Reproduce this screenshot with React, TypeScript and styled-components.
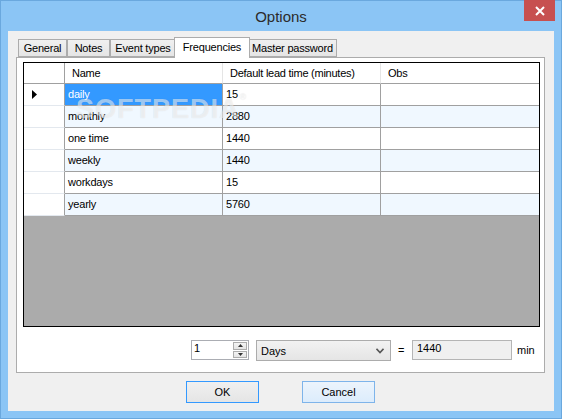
import React from 'react'
import styled, { createGlobalStyle } from 'styled-components'

const GlobalStyle = createGlobalStyle`
  html, body {
    margin: 0;
    padding: 0;
  }
  body {
    font-family: "Liberation Sans", Arial, sans-serif;
    font-size: 11px;
    color: #000;
  }
`

interface Frequency {
  name: string
  lead: string
  obs: string
}

const frequencies: Frequency[] = [
  { name: 'daily', lead: '15', obs: '' },
  { name: 'monthly', lead: '2880', obs: '' },
  { name: 'one time', lead: '1440', obs: '' },
  { name: 'weekly', lead: '1440', obs: '' },
  { name: 'workdays', lead: '15', obs: '' },
  { name: 'yearly', lead: '5760', obs: '' }
]

const tabs = [
  { label: 'General', width: 49 },
  { label: 'Notes', width: 43 },
  { label: 'Event types', width: 66 },
  { label: 'Frequencies', width: 72 },
  { label: 'Master password', width: 89 }
]

const App = () => {
  const activeTab = 'Frequencies'

  return (
    <>
      <GlobalStyle />
      <Window>
        <TitleBar>
          <span />
          <Title>Options</Title>
          <CloseButton>
            <svg width="10" height="10" viewBox="0 0 10 10">
              <path d="M1 1 L9 9 M9 1 L1 9" stroke="#fff" strokeWidth="2" />
            </svg>
          </CloseButton>
        </TitleBar>

        <Client>
          <TabStrip>
            {tabs.map((t) => (
              <Tab key={t.label} $width={t.width} $active={t.label === activeTab}>
                {t.label}
              </Tab>
            ))}
          </TabStrip>

          <TabPanel>
            <Grid>
              <GridRow $header>
                <HeaderCell $rowHeader />
                <HeaderCell>Name</HeaderCell>
                <HeaderCell>Default lead time (minutes)</HeaderCell>
                <HeaderCell>Obs</HeaderCell>
              </GridRow>
              {frequencies.map((f, i) => (
                <GridRow key={f.name}>
                  <RowHeaderCell>
                    {i === 0 && (
                      <svg width="5" height="9" viewBox="0 0 5 9">
                        <path d="M0 0 L5 4.5 L0 9 Z" fill="#000" />
                      </svg>
                    )}
                  </RowHeaderCell>
                  <Cell $alt={i % 2 === 1} $selected={i === 0}>
                    {f.name}
                  </Cell>
                  <Cell $alt={i % 2 === 1}>{f.lead}</Cell>
                  <Cell $alt={i % 2 === 1}>{f.obs}</Cell>
                </GridRow>
              ))}
              <Watermark>
                SOFTPEDIA<sup>®</sup>
              </Watermark>
            </Grid>

            <ControlsRow>
              <Spinner>
                <SpinValue>1</SpinValue>
                <SpinButtons>
                  <SpinButton>
                    <svg width="5" height="3" viewBox="0 0 5 3">
                      <path d="M0 3 L2.5 0 L5 3 Z" fill="#333" />
                    </svg>
                  </SpinButton>
                  <SpinButton>
                    <svg width="5" height="3" viewBox="0 0 5 3">
                      <path d="M0 0 L2.5 3 L5 0 Z" fill="#333" />
                    </svg>
                  </SpinButton>
                </SpinButtons>
              </Spinner>
              <Combo>
                <ComboText>Days</ComboText>
                <svg width="8" height="6" viewBox="0 0 8 6">
                  <path d="M0.5 0.8 L4 4.5 L7.5 0.8" stroke="#555" strokeWidth="1.6" fill="none" />
                </svg>
              </Combo>
              <Equals>=</Equals>
              <ReadOnlyBox>1440</ReadOnlyBox>
              <Unit>min</Unit>
            </ControlsRow>
          </TabPanel>

          <ButtonRow>
            <DialogButton $default>OK</DialogButton>
            <DialogButton $hover>Cancel</DialogButton>
          </ButtonRow>
        </Client>
      </Window>
    </>
  )
}

const Window = styled.div`
  width: 562px;
  height: 419px;
  box-sizing: border-box;
  background: #8bc5f5;
  border: 1px solid #6aa8de;
  display: flex;
  flex-direction: column;
`

const TitleBar = styled.div`
  height: 30px;
  display: grid;
  grid-template-columns: 1fr auto 1fr;
  align-items: start;
`

const Title = styled.div`
  font-size: 15px;
  line-height: 30px;
  padding-top: 1px;
  color: #2b2b2b;
`

const CloseButton = styled.div`
  justify-self: end;
  margin-top: -1px;
  margin-right: 6px;
  width: 31px;
  height: 21px;
  background: #c75050;
  display: flex;
  align-items: center;
  justify-content: center;
`

const Client = styled.div`
  flex: 1;
  margin: 0 7px 7px 7px;
  background: #f0f0f0;
  padding: 6px 9px 0 8px;
  display: flex;
  flex-direction: column;
`

const TabStrip = styled.div`
  height: 20px;
  display: flex;
  align-items: flex-start;
  padding-left: 2px;
  position: relative;
  z-index: 1;
`

const Tab = styled.div<{ $width: number; $active?: boolean }>`
  box-sizing: border-box;
  width: ${({ $width, $active }) => ($active ? $width + 4 : $width)}px;
  height: ${({ $active }) => ($active ? 21 : 18)}px;
  margin: ${({ $active }) => ($active ? '0 -2px' : '2px 0 0 0')};
  border: 1px solid #acacac;
  border-bottom: ${({ $active }) => ($active ? 'none' : '1px solid #acacac')};
  background: ${({ $active }) => ($active ? '#fff' : 'linear-gradient(#f0f0f0, #e5e5e5)')};
  position: relative;
  z-index: ${({ $active }) => ($active ? 2 : 1)};
  display: flex;
  align-items: center;
  justify-content: center;
  padding-bottom: ${({ $active }) => ($active ? 3 : 0)}px;
  letter-spacing: -0.2px;
  white-space: nowrap;
  cursor: default;
`

const TabPanel = styled.div`
  box-sizing: border-box;
  height: 316px;
  border: 1px solid #acacac;
  background: #fff;
  padding: 4px 4px 0 6px;
  display: flex;
  flex-direction: column;
`

const Grid = styled.div`
  box-sizing: border-box;
  height: 265px;
  border: 1px solid #000;
  background: #ababab;
  position: relative;
  overflow: hidden;
`

const GridRow = styled.div<{ $header?: boolean }>`
  display: grid;
  grid-template-columns: 41px 158px 158px 1fr;
  height: ${({ $header }) => ($header ? 21 : 22)}px;
`

const HeaderCell = styled.div<{ $rowHeader?: boolean }>`
  box-sizing: border-box;
  background: #fff;
  border-right: 1px solid ${({ $rowHeader }) => ($rowHeader ? '#a0a0a0' : '#e5e5e5')};
  border-bottom: 1px solid #a0a0a0;
  padding-left: 7px;
  line-height: 20px;
  letter-spacing: -0.25px;
  white-space: nowrap;
  overflow: hidden;

  &:last-child {
    border-right: none;
  }
`

const RowHeaderCell = styled.div`
  box-sizing: border-box;
  background: #fff;
  border-right: 1px solid #a0a0a0;
  border-bottom: 1px solid #e3e8ee;
  display: flex;
  align-items: center;
  padding-left: 8px;
`

const Cell = styled.div<{ $alt?: boolean; $selected?: boolean }>`
  box-sizing: border-box;
  background: ${({ $alt, $selected }) => ($selected ? '#3399ff' : $alt ? '#f0f8ff' : '#fff')};
  color: ${({ $selected }) => ($selected ? '#fff' : '#000')};
  border-right: 1px solid #a0a0a0;
  border-bottom: 1px solid #a0a0a0;
  padding-left: 3px;
  line-height: 21px;
  letter-spacing: -0.2px;
  white-space: nowrap;
  overflow: hidden;

  &:last-child {
    border-right: none;
  }
`

const Watermark = styled.div`
  position: absolute;
  left: 52px;
  top: 31px;
  font-family: "Liberation Sans", Arial, sans-serif;
  font-weight: bold;
  font-size: 27px;
  letter-spacing: 1px;
  color: rgba(255, 255, 255, 0.55);
  text-shadow: 0 0 1px rgba(0, 0, 0, 0.12);
  pointer-events: none;

  sup {
    font-size: 9px;
    vertical-align: top;
    position: relative;
    top: -2px;
  }
`

const ControlsRow = styled.div`
  display: flex;
  align-items: flex-start;
  margin-top: 13px;
  padding-left: 168px;
  height: 22px;
`

const Spinner = styled.div`
  box-sizing: border-box;
  width: 58px;
  height: 20px;
  border: 1px solid #abadb3;
  background: #fff;
  display: flex;
`

const SpinValue = styled.span`
  flex: 1;
  padding-left: 2px;
  line-height: 15px;
`

const SpinButtons = styled.div`
  width: 14px;
  margin: 1px 1px 1px 0;
  display: flex;
  flex-direction: column;
  gap: 1px;
`

const SpinButton = styled.div`
  flex: 1;
  box-sizing: border-box;
  border: 1px solid #acacac;
  background: linear-gradient(#f4f4f4, #e4e4e4);
  display: flex;
  align-items: center;
  justify-content: center;
`

const Combo = styled.div`
  box-sizing: border-box;
  width: 135px;
  height: 21px;
  margin-left: 7px;
  border: 1px solid #acacac;
  background: linear-gradient(#f2f2f2, #e5e5e5);
  display: flex;
  align-items: center;
  padding: 0 6px 0 4px;
`

const ComboText = styled.span`
  flex: 1;
`

const Equals = styled.span`
  margin-left: 7px;
  width: 14px;
  line-height: 20px;
`

const ReadOnlyBox = styled.div`
  box-sizing: border-box;
  width: 100px;
  height: 20px;
  border: 1px solid #b5b5b5;
  background: #f0f0f0;
  padding-left: 4px;
  line-height: 15px;
`

const Unit = styled.span`
  margin-left: 5px;
  line-height: 21px;
`

const ButtonRow = styled.div`
  display: flex;
  justify-content: center;
  gap: 43px;
  margin-top: 8px;
`

const DialogButton = styled.button<{ $default?: boolean; $hover?: boolean }>`
  box-sizing: border-box;
  width: 73px;
  height: 22px;
  padding: 0;
  font-family: "Liberation Sans", Arial, sans-serif;
  font-size: 11px;
  color: #000;
  border: 1px solid ${({ $default, $hover }) => ($default ? '#3399ff' : $hover ? '#7eb4ea' : '#acacac')};
  background: ${({ $hover }) => ($hover ? 'linear-gradient(#ecf4fc, #dcecfc)' : 'linear-gradient(#f0f0f0, #e5e5e5)')};
`

export default App
